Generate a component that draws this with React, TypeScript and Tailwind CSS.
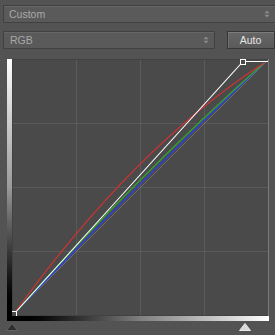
import React from "react";

function UpDown({ color = "#8a8a8a" }: { color?: string }) {
  return (
    <svg width="6" height="8" viewBox="0 0 6 8">
      <path d="M0.5 3.2 L3 0.6 L5.5 3.2 Z" fill={color} />
      <path d="M0.5 4.8 L3 7.4 L5.5 4.8 Z" fill={color} />
    </svg>
  );
}

export default function App() {
  const grid = [64, 128, 192];
  return (
    <div
      className="w-[275px] h-[335px] bg-[#535353] overflow-hidden flex flex-col"
      style={{ fontFamily: '"Liberation Sans", Arial, sans-serif' }}
    >
      {/* Custom dropdown */}
      <div className="mt-[5px] ml-[3px] w-[285px] h-[18px] shrink-0 bg-[#5a5a5a] border border-[#414141] shadow-[inset_0_1px_0_#666] flex items-center pl-[5px]">
        <span className="text-[10.5px] leading-none text-[#a8a8a8]">Custom</span>
        <div className="ml-auto mr-[17px] flex items-center">
          <UpDown color="#8c8c8c" />
        </div>
      </div>

      {/* RGB + Auto row */}
      <div className="mt-[8px] flex items-center h-[18px] shrink-0">
        <div className="ml-[3px] w-[222px] h-[18px] bg-[#5a5a5a] border border-[#414141] shadow-[inset_0_1px_0_#666] flex items-center pl-[6px] pr-[5px]">
          <span className="text-[10.5px] leading-none text-[#a8a8a8]">RGB</span>
          <div className="ml-auto flex items-center">
            <UpDown color="#8c8c8c" />
          </div>
        </div>
        <div className="ml-[12px] w-[50px] h-[18px] border border-[#363636] bg-gradient-to-b from-[#666] to-[#5a5a5a] shadow-[inset_0_1px_0_#7c7c7c,inset_1px_0_0_#707070] flex items-center pl-[12px]">
          <span className="text-[10.5px] leading-none text-[#e6e6e6]">Auto</span>
        </div>
      </div>

      {/* Graph */}
      <div className="mt-[10px] flex shrink-0">
        <div className="ml-[7px] w-[5px] h-[257px] bg-gradient-to-b from-white via-[#9a9a9a] to-black" />
        <div className="relative w-[257px] h-[257px] bg-[#4a4a4a]">
          <svg width="257" height="257" viewBox="0 0 257 257" className="block">
            <rect x="0.5" y="0.5" width="256" height="256" fill="none" stroke="#424242" />
            <line x1="256.5" y1="0" x2="256.5" y2="257" stroke="#7a7a7a" />
            {grid.map((g) => (
              <g key={g}>
                <line x1={g + 0.5} y1="1" x2={g + 0.5} y2="256" stroke="#5a5a5a" />
                <line x1="1" y1={g + 0.5} x2="256" y2={g + 0.5} stroke="#5a5a5a" />
              </g>
            ))}
            <line x1="1" y1="256" x2="256" y2="1" stroke="#6c6c6c" />
            <path d="M1.5 255.5 Q130 120 252 4" fill="none" stroke="#3040e8" strokeWidth="1.2" />
            <path d="M1.5 255.5 Q128 114 252 4" fill="none" stroke="#30a830" strokeWidth="1.2" />
            <path d="M1.5 255.5 Q122 88 252 4" fill="none" stroke="#d03232" strokeWidth="1.2" />
            <path d="M2 255 L231 2.5 L256 2.5" fill="none" stroke="#ffffff" strokeWidth="1.1" />
            <rect x="228.5" y="0.5" width="5" height="5" fill="#4a4a4a" stroke="#ffffff" />
            <rect x="-0.5" y="252.5" width="5" height="5" fill="#4a4a4a" stroke="#ffffff" />
          </svg>
        </div>
      </div>
      <div className="ml-[7px] mt-0 flex shrink-0">
        <div className="w-[5px] h-[5px] bg-black" />
        <div className="w-[257px] h-[5px] bg-gradient-to-r from-black via-[#808080] to-white" />
      </div>
      <div className="relative h-[12px] shrink-0">
        <svg width="12" height="8" viewBox="0 0 12 8" className="absolute left-[6px] top-[2px]">
          <path d="M6 0.5 L11.5 7.5 L0.5 7.5 Z" fill="#2e2e2e" stroke="#6a6a6a" strokeWidth="0.8" />
        </svg>
        <svg width="12" height="8" viewBox="0 0 12 8" className="absolute left-[239px] top-[2px]">
          <path d="M6 0.5 L11.5 7.5 L0.5 7.5 Z" fill="#d8d8d8" stroke="#ffffff" strokeWidth="0.8" />
        </svg>
      </div>
    </div>
  );
}
